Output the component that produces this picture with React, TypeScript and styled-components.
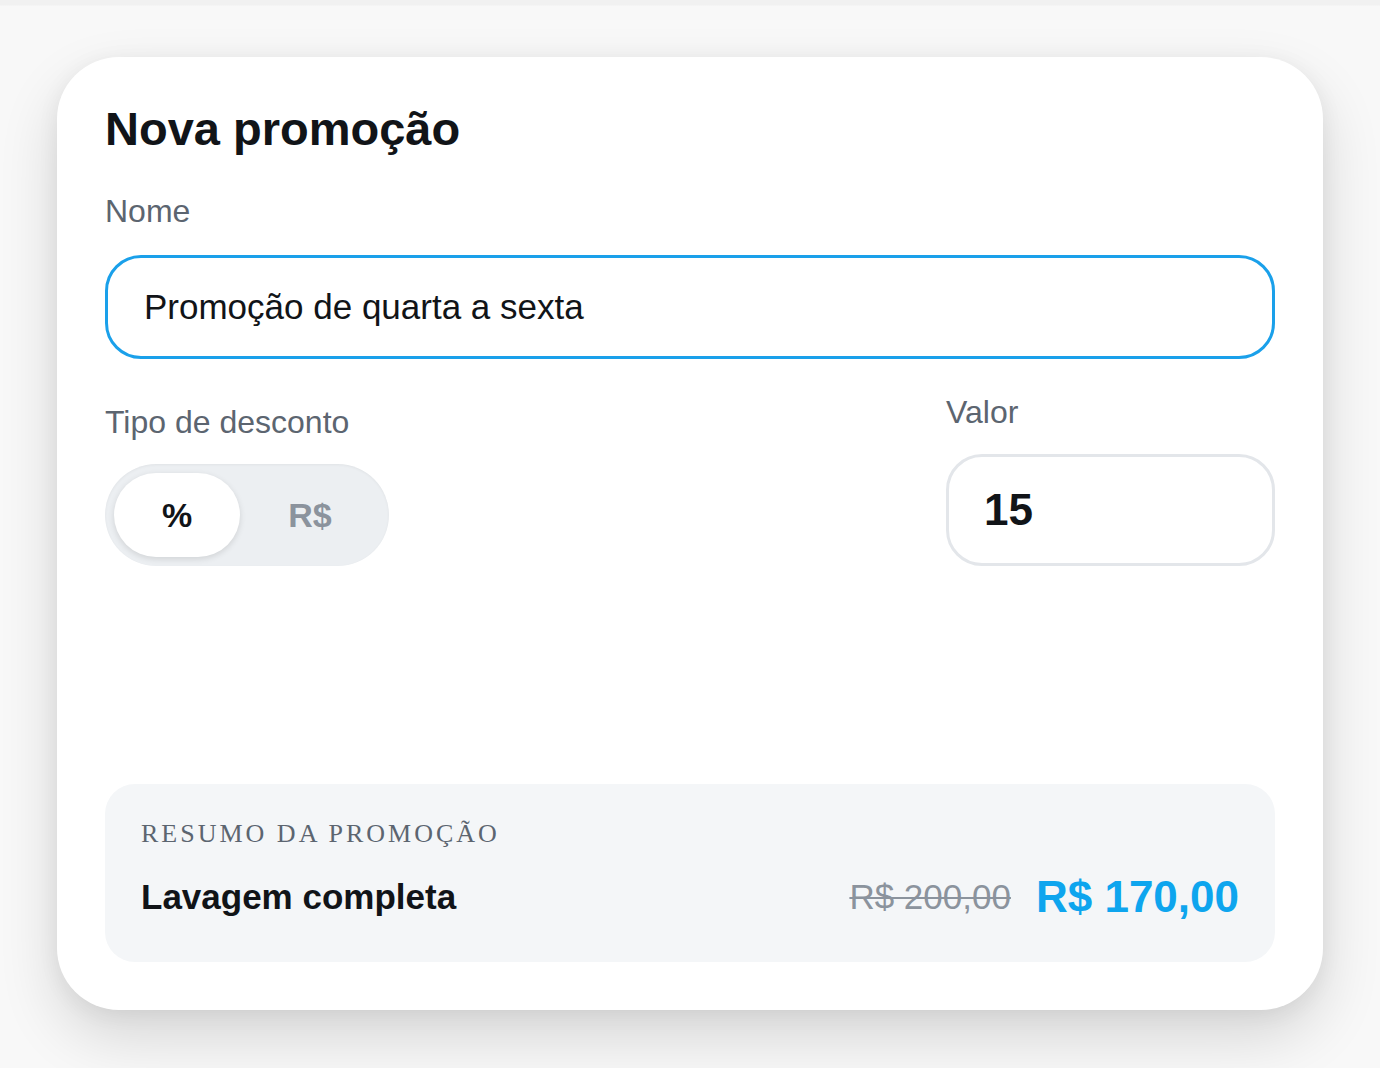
import React from "react";
import styled, { createGlobalStyle } from "styled-components";

const GlobalStyle = createGlobalStyle`
  html, body {
    margin: 0;
    padding: 0;
  }
  body {
    background: linear-gradient(#f1f1f1 0, #f1f1f1 5px, #f8f8f8 6px, #f8f8f8 100%);
    font-family: "Liberation Sans", Arial, sans-serif;
    color: #111418;
  }
  * { box-sizing: border-box; }
`;

const Page = styled.div`
  padding: 57px;
  min-height: 1068px;
`;

const Card = styled.section`
  background: #ffffff;
  border-radius: 62px;
  height: 953px;
  padding: 45px 48px 48px;
  display: flex;
  flex-direction: column;
  box-shadow: 0 26px 60px rgba(0, 0, 0, 0.14), 0 4px 22px rgba(0, 0, 0, 0.06);
`;

const Title = styled.h1`
  margin: 0;
  font-size: 47px;
  line-height: 54px;
  font-weight: 700;
  color: #111418;
`;

const Label = styled.label<{ $top?: number }>`
  display: block;
  margin-top: ${(p) => p.$top ?? 0}px;
  font-size: 32px;
  line-height: 40px;
  color: #5c6570;
`;

const TextInput = styled.input<{ $focused?: boolean; $bold?: boolean; $h: number; $size: number }>`
  display: block;
  width: 100%;
  height: ${(p) => p.$h}px;
  margin-top: 22px;
  padding: 0 35px;
  border: 3px solid ${(p) => (p.$focused ? "#1aa0ea" : "#e3e6ea")};
  border-radius: 36px;
  background: #fff;
  font-family: "Liberation Sans", Arial, sans-serif;
  font-size: ${(p) => p.$size}px;
  font-weight: ${(p) => (p.$bold ? 700 : 400)};
  color: #111418;
  outline: none;
`;

const NameInput = styled(TextInput)`
  margin-top: 24px;
  padding: 0 36px;
`;

const Row = styled.div`
  margin-top: 33px;
  display: grid;
  grid-template-columns: 1fr 329px;
  align-items: end;
`;

const Field = styled.div`
  display: flex;
  flex-direction: column;
`;

const Toggle = styled.div`
  margin-top: 22px;
  align-self: flex-start;
  display: inline-flex;
  height: 102px;
  padding: 9px;
  border-radius: 51px;
  background: #eceff2;
  box-shadow: inset 0 1px 3px rgba(0, 0, 0, 0.05);
`;

const Segment = styled.button<{ $active?: boolean }>`
  border: none;
  height: 84px;
  padding: 0 48px;
  border-radius: 42px;
  font-family: "Liberation Sans", Arial, sans-serif;
  font-size: 34px;
  font-weight: 700;
  cursor: pointer;
  background: ${(p) => (p.$active ? "#ffffff" : "transparent")};
  color: ${(p) => (p.$active ? "#111418" : "#8b939d")};
  box-shadow: ${(p) => (p.$active ? "0 2px 6px rgba(0,0,0,0.12)" : "none")};
`;

const Summary = styled.div`
  margin-top: auto;
  background: #f4f6f8;
  border-radius: 30px;
  padding: 35px 36px 40px;
`;

const SummaryLabel = styled.div`
  font-family: "Liberation Serif", "Times New Roman", serif;
  font-size: 26px;
  line-height: 30px;
  letter-spacing: 3px;
  text-transform: uppercase;
  color: #5c6570;
`;

const SummaryRow = styled.div`
  margin-top: 23px;
  height: 50px;
  display: flex;
  align-items: center;
  justify-content: space-between;
`;

const ServiceName = styled.div`
  font-size: 35px;
  font-weight: 700;
  color: #111418;
`;

const Prices = styled.div`
  display: flex;
  align-items: center;
  gap: 25px;
`;

const OldPrice = styled.span`
  font-size: 35px;
  color: #8b939d;
  text-decoration: line-through;
  text-decoration-thickness: 2px;
`;

const NewPrice = styled.span`
  font-size: 44px;
  line-height: 50px;
  font-weight: 700;
  color: #0ea5ee;
`;

export default function App() {
  return (
    <>
      <GlobalStyle />
      <Page>
        <Card>
          <Title>Nova promoção</Title>
          <Label $top={35}>Nome</Label>
          <NameInput
            $focused
            $h={104}
            $size={35}
            defaultValue="Promoção de quarta a sexta"
          />
          <Row>
            <Field>
              <Label>Tipo de desconto</Label>
              <Toggle>
                <Segment $active>%</Segment>
                <Segment>R$</Segment>
              </Toggle>
            </Field>
            <Field>
              <Label>Valor</Label>
              <TextInput $bold $h={112} $size={44} defaultValue="15" />
            </Field>
          </Row>
          <Summary>
            <SummaryLabel>Resumo da promoção</SummaryLabel>
            <SummaryRow>
              <ServiceName>Lavagem completa</ServiceName>
              <Prices>
                <OldPrice>R$ 200,00</OldPrice>
                <NewPrice>R$ 170,00</NewPrice>
              </Prices>
            </SummaryRow>
          </Summary>
        </Card>
      </Page>
    </>
  );
}
